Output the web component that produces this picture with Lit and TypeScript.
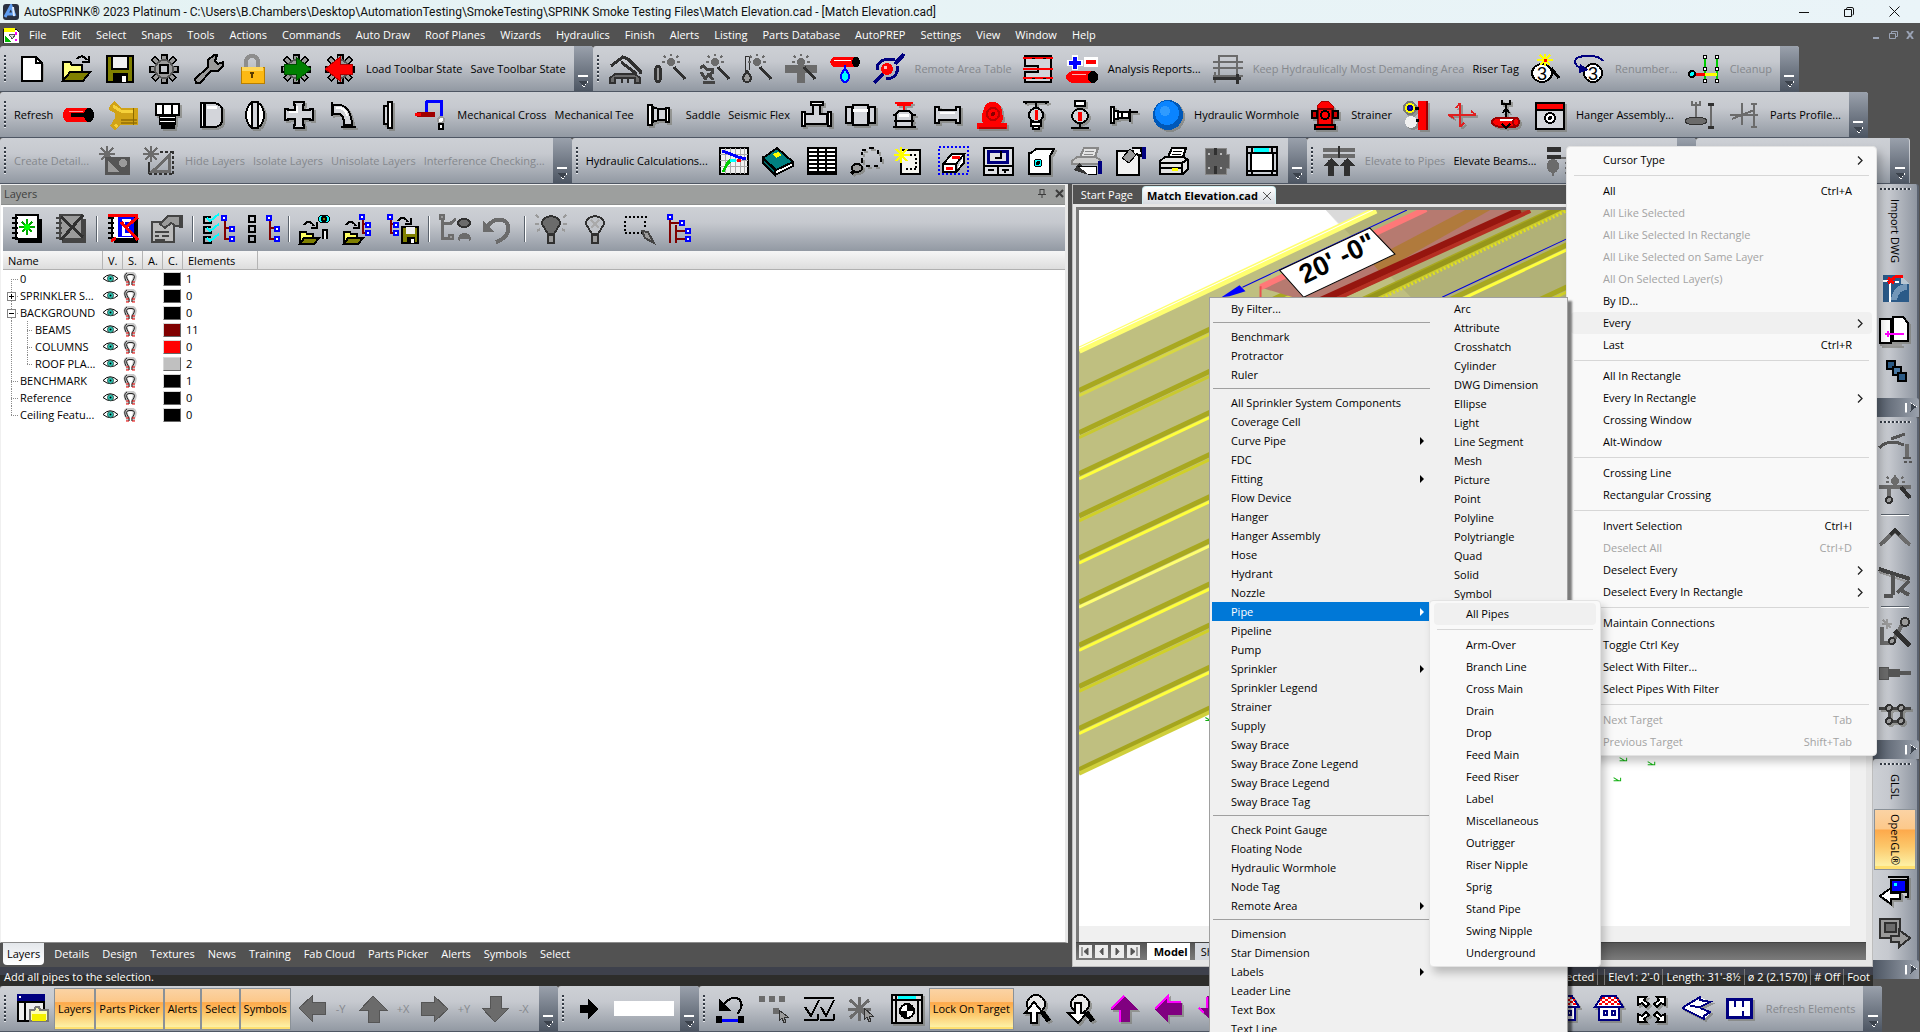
import { LitElement, html, svg, css, nothing } from "lit";
import { customElement, property } from "lit/decorators.js";
import { classMap } from "lit/directives/class-map.js";

/* ---------- icon shapes: [path, fill, stroke, stroke width] on a 32x30 grid ---------- */
type Shape = [string, string, string?, number?];
type Glyph = { t: string; x: number; y: number; s: number };

const K = "#000", W = "#fff", N = "none", G = "#6b6b6b", D = "#303030", L = "#9a9a9a";
const R = "#f00", B = "#00f", V = "#000080", O = "#808000", Y = "#ff0", C = "#00ffff", P = "#800080", S = "#d3d5da";

const el = (x: number, y: number, a: number, b = a) =>
  `M${x - a} ${y}a${a} ${b} 0 1 0 ${2 * a} 0a${a} ${b} 0 1 0 ${-2 * a} 0Z`;
const box = (x: number, y: number, w: number, h: number) => `M${x} ${y}h${w}v${h}h${-w}Z`;

const cog: Shape[] = [
  ["M16 0V30M1 15H31M5 4L27 26M27 4L5 26", N, K, 7],
  ["M16 2V28M3 15H29M6 5L26 25M26 5L6 25", N, L, 4],
  [el(16, 15, 9), L, "#555"],
  [box(12, 11, 8, 8), "#c4c7cc", K],
];
const wand = (x = 16): Shape[] => [
  [el(x, 8, 4), G],
  [`M${x} 0V2M${x - 9} 8h3M${x + 6} 8h3M${x - 7} 2l2 2M${x + 7} 2l-2 2`, N, G],
  [`M${x + 3} 13L${x + 14} 25`, N, D, 3],
];
const node = (x: number, y: number): Shape => [box(x, y, 4, 4), W, B];
const tree = (x: number): Shape[] => [
  [`M${x + 3} 5V25H${x + 9}M${x + 3} 14H${x + 9}`, N, "#800000"],
  node(x, 2), node(x + 8, 13), node(x + 8, 23),
];
const smallTree = (x: number): Shape[] => [
  [`M${x + 3} 5V19H${x + 8}M${x + 3} 10H${x + 8}`, N, "#800000"],
  node(x, 1), node(x + 6, 9), node(x + 6, 17),
];
const folder = (x: number, y: number): Shape[] => [
  [`M${x} ${y + 11}V${y}H${x + 6}L${x + 7} ${y + 2}H${x + 13}V${y + 6}`, "#ffff60", K],
  [`M${x} ${y + 12}L${x + 4} ${y + 6}H${x + 19}L${x + 14} ${y + 12}Z`, O, K],
];
const hop = (x: number, y: number): Shape => [`M${x} ${y + 4}Q${x + 5} ${y - 3} ${x + 10} ${y + 5}M${x + 7} ${y + 7}H${x + 13}V${y + 1}`, N, K];
const book = (f: string, s: string): Shape[] => [
  [box(7, 5, 24, 24), s], [box(5, 1, 22, 24), f, s],
  ["M1 4H7M1 9H7M1 14H7M1 19H7M1 24H7", N, s],
];
const printer = (s: string, f: string): Shape[] => [
  ["M10 11L14 2H28L25 11Z", W, s], ["M15 5H24M14 8H23", N, s, 1],
  ["M2 15L7 11H26L30 14V23L25 28H2Z", f, s], ["M3 17H24V27M24 17L30 13M3 22H23", N, s],
];
const pan = (rot: number): Shape[] => {
  const a = [
    "M16 2L30 16H22V28H11V16H2Z", "M2 15L16 2V9H30V21H16V28Z", "M16 28L30 14H22V2H11V14H2Z", "M30 15L16 2V9H2V21H16V28Z",
  ][rot];
  return [[a, P], [["M3 15L16 2M12 16V28", "M3 15L16 2V8H29", "M11 14V3M3 14L8 19", "M3 20V10H16V3"][rot], N, "#f0f"]];
};
const gray = (rot: number): Shape[] => {
  const a = [
    "M14 2L28 16H20V28H9V16H1Z", "M1 14L14 2V8H27V20H14V27Z", "M14 28L28 14H20V2H9V14H1Z", "M28 15L14 2V8H1V21H14V28Z",
  ][rot];
  return [[a, G, "#555", 1]];
};
const loupe = (up: boolean): Shape[] => [
  [el(16, 10, 9), "#e8e8e8", K], ["M22 18L29 27", N, K, 5],
  [up ? "M11 29V19H5L14 8L23 19H17V29Z" : "M11 9V19H4L14 29L23 19H17V9Z", W, K],
];
const house: Shape[] = [
  [box(7, 13, 20, 13), W, V], [box(12, 17, 3, 4), W, V], [box(20, 17, 3, 4), W, V],
  ["M3 13L10 2H24L31 13Z", W, V],
  ["M10 4h3M16 4h3M22 4h2M8 6h2M13 6h3M19 6h3M25 6h2M10 8h3M16 8h3M22 8h3M7 10h3M13 10h3M19 10h3M25 10h3", N, R],
];
const elbowHead: Shape[] = [["M16 3V8", N, K], [el(16, 15, 7, 7), S, K], ["M16 10V20", N, R, 3], [box(11, 22, 10, 4), W, K], [box(13, 26, 6, 3), W, K]];

const ICONS: Record<string, (Shape | Glyph)[]> = {
  "New": [["M7 4H21L28 10V28H7Z", "#999"], ["M6 3H20L26 9V27H6Z", W, K], ["M20 3V9H26", N, K]],
  "Open": [["M3 27V8H10L12 11H22V18", "#ffff80", K], ["M3 27L10 18H30L23 27Z", O, K], ["M17 5Q22 -1 27 6M22 8H29V2", N, K]],
  "Save": [[box(3, 2, 26, 26), O, K], [box(8, 2, 16, 13), "#f0f0f0", K], [box(9, 19, 15, 9), K], [box(18, 22, 4, 6), W]],
  "Options": cog,
  "Configure": [["M3 25L16 13V6L22 1H25L23 7L26 10L31 8V12L26 17H19L8 29H4Z", L, K]],
  "Lock": [["M10 13V7Q11 2 16 2Q21 2 22 7V13", N, "#8d8d8d", 4], [box(5, 13, 23, 16), "#fdb913", "#b97f00", 1], [box(6, 13, 21, 4), "#ffd75a"], ["M16 19V24M14 19H18", N, "#5a3a00"]],
  "Import State": [...cog, ["M4 10H16V3L31 15L16 27V20H4Z", "#008000", "#004d00", 1]],
  "Export State": [...cog, ["M28 10H16V3L1 15L16 27V20H28Z", R, "#a00", 1]],

  "Dome": [["M2 12L14 3L19 5L31 17V20M12 8L28 20", N, D, 3], ["M1 29V24L6 20H26L31 24V29H26V24H6V29ZM13 24V29M19 24V29", G, D]],
  "Auto Pipe": [[el(5, 20, 3, 8), L, D, 3], ...wand(18)],
  "Auto Sprinkler": [["M3 14L6 12L10 15H15V19L9 23M4 18L9 26M6 28H18M11 19L16 26", N, "#444", 3], ...wand(18)],
  "Auto Drop": [["M4 2V18M8 2V16M4 2H9", N, D, 1], ["M6 17L2 23Q2 28 6 28Q10 28 10 23Z", L, D], ...wand(16)],
  "Auto Tee": [["M0 11H32V19H20V29H12V19H0Z", G], ...wand(16)],
  "Pipe Drop": [["M4 3H27V13H4L1 8Z", R], ["M5 6H22", N, "#fff", 1], [el(27, 8, 4, 5), K], ["M16 14L12 21Q12 28 16 28Q20 28 20 21Z", C, B], ["M16 11V16", N, B]],
  "Target Line": [["M1 29L10 20M22 10L31 0", N, V, 4], ["M4 16Q4 5 18 5H22M24 12Q26 24 13 25", N, V, 3], [el(14, 15, 6), R], [box(11, 12, 3, 3), "#fbb"]],
  "Area Table": [["M3 2H29V28H3V18H16V12H3Z", S, K], ["M1 4H31M1 15H31M1 24H31", N, R], ["M11 4V5M22 4V5M11 24V25M22 24V25", N, K, 3]],
  "Add Remove": [["M6 1H12V6H17V12H12V16H6V12H1V6H6Z", W], ["M9 3V15M3 9H15", N, B, 4], [box(18, 3, 14, 10), W], [box(20, 6, 10, 4), R], [el(8, 23, 8, 6), R], [box(7, 17, 18, 12), R], ["M6 20H20", N, "#ffb0b0", 1], [el(27, 23, 5, 6), K]],
  "Area Grid": [["M8 2H26V24H8ZM2 8H32M2 14H32M2 22H32M8 24H2M4 18V29", N, G, 2], ["M2 24H30M26 20V30", N, D, 3]],
  "Tag Number": [[el(13, 19, 10, 9), W, K], { t: "3", x: 8, y: 26, s: 18 }, ["M16 0V12M8 6H24M11 1L21 11M21 1L11 11", N, Y], [box(15, 5, 3, 3), R], ["M22 14L30 24", N, K, 3]],
  "Renumber Tag": [[el(20, 19, 9, 9), W, K], { t: "3", x: 15, y: 26, s: 18 }, ["M30 7Q25 1 14 2Q2 2 2 8Q3 13 10 15", N, V, 2], ["M7 10L16 16L6 19Z", V]],
  "Clean Nodes": [["M17 4V28M29 4V28", N, "#0c0", 2], ["M4 20H17", N, R, 3], ["M17 20H29", N, Y, 3], [el(4, 20, 3), C, K], ...[3, 15, 27].flatMap((y) => [[el(17, y, 2), W, K, 1], [el(29, y, 2), W, K, 1]] as Shape[])],

  "Pipe": [[el(5, 15, 5, 7), R], [box(5, 8, 20, 14), R], [box(8, 13, 14, 4), K], ["M6 11H20", N, "#ff9a9a", 1], [el(26, 15, 5, 7), K]],
  "Siamese": [["M3 5L8 1L14 8H31V25H14L8 30L3 26L8 18V13L2 10Z", "#d1a316"], ["M6 6L14 11H26M10 25L8 27", N, "#f5d13a", 3], ["M14 23H30M14 20H30", N, "#a27a08", 2], ["M26 8V25", N, "#8a6a00", 1]],
  "Cap Nut": [["M5 4H28V15H5ZM12 4V15M21 4V15", W, K], ["M8 18H25M8 22H25M10 26H24", N, K, 5], ["M9 17H24M9 21H24", N, W, 1]],
  "Cap": [["M10 3H20Q27 5 27 10V20Q27 26 20 27H10Z", S, K], [box(6, 3, 3, 24), W, K], ["M12 7H22", N, W, 3]],
  "Coupling": [[el(16, 15, 9, 13), W, K], [box(13, 2, 6, 26), S, K]],
  "Cross": [["M11 2H21V5H20V10H27V9H30V20H27V19H20V25H21V28H11V25H12V19H5V20H2V9H5V10H12V5H11Z", S, K], ["M14 6V12H6", N, W]],
  "Elbow": [["M6 5H12Q24 6 25 25H17Q17 14 12 14H6Z", S, K], ["M5 2V16M14 27H29", N, K, 2], ["M9 8H13Q19 9 20 16", N, W]],
  "Flange": [[box(17, 2, 4, 26), W, K], [box(13, 6, 4, 18), S, K]],
  "Flexible Drop": [["M11 14V3Q11 1 14 1H26V16", N, B, 3], [box(2, 12, 18, 5), "#a00000"], ["M0 14H6", N, R, 3], [el(26, 20, 3), W, L], [box(24, 24, 4, 5), W, K]],
  "Reducer": [["M4 5H8V25H4Z", W, K], ["M9 7L14 9V20L9 22Z", S, K], [box(14, 9, 8, 11), S, K], [box(22, 8, 3, 14), W, K]],
  "Tee": [["M13 5H20V14H27V24H5V14H13Z", S, K], [box(2, 12, 3, 14), W, K], [box(28, 12, 3, 14), W, K], [box(11, 2, 12, 3), W, K]],
  "Union": [[box(2, 7, 6, 16), S, K], [box(25, 7, 6, 16), S, K], [box(9, 5, 15, 20), S, K], ["M9 10H24", N, W, 3]],
  "Valve": [["M7 3H25M9 5H23M16 5V12", N, R], ["M8 14L11 11H21L24 14V27H8Z", S, K], ["M5 15H8M24 15H28M5 27H8M24 27H28M6 21H26", N, K, 2], ["M11 15H21", N, W, 3]],
  "Nipple": [["M3 7H7V10H24V7H28V23H24V20H7V23H3Z", S, K], ["M8 13H23", N, W, 2]],
  "Pump": [["M8 9Q9 2 16 2Q26 2 26 12Q28 20 25 23H31V29H1V23H7Q4 17 8 9Z", R], [el(17, 14, 6), N, "#b00"], [el(17, 14, 2), "#800"], ["M3 28H30", N, "#b00"]],
  "Upright Sprinkler": [["M3 2H29M6 2V4M26 2V4", N, K, 2], ...elbowHead],
  "Pendent Sprinkler": [[box(11, 1, 10, 5), W, K], [el(16, 16, 8, 7), S, K], ["M16 12V21", N, R, 4], ["M16 22V27M7 28H25", N, K, 2]],
  "Sidewall Sprinkler": [["M3 7H6V23H3ZM6 11H10V19H6ZM10 12H21V18H10M22 9V22M22 12H30M14 12V19", W, K]],
  "Sphere": [[el(16, 15, 15), "#0058b8"], [el(15, 13, 12), "#0a84ff"], [el(13, 11, 5), "#2f9bff"]],
  "Hydrant": [["M13 1H19L24 6V9H8V6Z", R, "#a00", 1], [box(9, 9, 14, 16), R, "#700"], [box(3, 11, 5, 7), "#c00", K], [box(24, 11, 5, 7), "#c00", K], [el(16, 15, 4), R, K], [box(6, 25, 20, 4), "#d00", K]],
  "Wall Pipe": [[box(16, 1, 9, 29), R], ["M25 1V30", N, "#900"], [el(8, 8, 6), Y, "#777"], [el(8, 8, 2), B, V], [el(9, 22, 6), "#f0f0f0"], ["M13 8H17M14 20H17", N, K, 3]],
  "Direction": [["M14 3V27M2 15H30M14 3L10 8M30 15L25 11M2 15L8 18M14 27L18 23", N, "#e02020"]],
  "Hanger": [["M16 4V22M12 0V4H20V0", N, K], [el(8, 22, 6, 4), R, "#900"], [box(8, 18, 18, 8), R], ["M8 18H26M8 27H26", N, "#900"], ["M10 20H24", N, W], [el(26, 22, 3, 4), R, "#900"], ["M13 13L16 8L19 13M12 24L16 28L20 24", N, K]],
  "Hanger Report": [[box(2, 3, 28, 26), "#d4d6da", K], [box(3, 4, 26, 5), R], ["M2 10H30", N, K], [el(16, 18, 5), W, K], [el(16, 18, 1), K, K]],
  "Move Hanger": [["M12 2V18M8 1V5H16V1M27 4V27", N, G, 2], [el(12, 21, 11, 4), G, D, 1], ["M24 4H30M24 27H30", N, D, 3]],
  "Spread Hanger": [["M14 3V25M2 15H30M4 19L26 10M26 3V27M23 4H29M23 27H29", N, G, 2]],

  "Copy Detail": [["M8 0V16M0 8H16M2 2L14 14M14 2L2 14", N, G, 2], [box(6, 11, 25, 18), "#555"], [el(24, 17, 4), L], ["M9 26V15L20 26Z", L]],
  "Detail Area": [["M8 0V16M0 8H16M2 2L14 14M14 2L2 14", N, G, 2], ["M6 28V16M6 28h3m2 0h3m2 0h3m2 0h3m2 0h3M30 28v-3m0-2v-3m0-2v-3m0-2v-3m0-2v-2h-3m-2 0h-3m-2 0h-3", N, D, 2], ["M10 25L26 10V25Z", N, G, 3]],
  "Hydraulic Graph": [[box(2, 2, 28, 26), "#f2f2f2", K], ["M7 2V28M12 2V28M17 2V28M22 2V28M26 2V28M2 8H30M2 14H30M2 20H30", N, "#aaa", 1], ["M4 5L10 7L20 11L28 13", N, B, 3], ["M5 26L9 18L13 14", N, "#0c0", 3], [box(12, 13, 6, 3), C], [box(19, 13, 4, 3), R]],
  "Reference Book": [["M1 12L15 2L31 16L14 24Z", "#008080", K], ["M1 12V17L13 29L31 20V16L14 24Z", W, K], ["M1 12V17L13 29V24Z", "#006a6a", K], ["M11 8L16 6L20 9L14 12Z", Y]],
  "Listing": [[box(2, 2, 28, 26), W, K], ["M2 6H30M2 10H30M2 14H30M2 18H30M2 22H30M2 26H30", N, K, 2], ["M12 2V28M20 2V28", N, K]],
  "Zoom Area": [["M12 4H16M19 2H24M28 4V8M31 11V16M28 20H24M20 20H16M12 17V12M12 9V6", N, K, 2], [el(7, 22, 5, 4), L, K], ["M1 28L4 25", N, K, 3]],
  "New Sheet": [[box(7, 4, 19, 24), "#f6f6f0", K], ["M12 9h2m2 0h2m2 0h2M22 12v2m0 2v2m0 2v2M12 23h2m2 0h2m2 0h2", N, K, 2], ["M7 1V17M0 9H16M2 3L13 15M13 3L2 15", N, Y]],
  "Erase Region": [[box(1, 1, 29, 27), N, B, 2], ["M5 18L14 8H26L18 18V26H5ZM18 18H5M18 26L26 17V8", W, K], ["M14 11H22M8 22H15", N, R, 3]],
  "Title Block": [[box(2, 2, 29, 27), "#e0e2e6", K], [box(6, 5, 19, 11), N, V, 3], ["M2 20H31M16 20V29M19 5V12H13", N, K], ["M6 24H12M20 24H27M23 24V27", N, K]],
  "Report View": [["M5 7L10 3H28L24 10V28H3V7Z", W, K], [el(12, 17, 4, 4), C, K, 1], [el(12, 17, 1), O, K]],
  "Print Setup": [["M10 11L14 2H28L25 11Z", "#e4e4e4", "#888"], ["M15 5H24M14 8H23", N, "#888", 1], ["M2 15L7 11H26L30 14V18H2Z", "#ccc", "#888"], ["M4 24L9 17L24 28H15Z", "#333"], ["M8 20H26V28H18", W, K, 1], [box(28, 15, 4, 13), V]],
  "Properties": [[box(3, 5, 22, 24), "#f2f2f2", K], ["M8 12L16 3L22 9L15 17Z", L, K, 1], ["M18 2H27L28 10L22 8", W, K], [box(28, 1, 4, 12), V]],
  "Print": [...printer(K, "#e4e4e4"), [box(14, 22, 6, 3), Y]],
  "Connect": [["M3 2H24V8H27V22H24V28H3Z", "#5c5c5c", "#888", 1], ["M13 2V9M13 20V28", N, D, 3], ["M7 7V9M7 21V23M19 7V9M19 21V23", N, "#bbb", 2]],
  "Viewport": [[box(1, 1, 30, 28), "#ccd0d6", K], [box(8, 2, 15, 5), C], [box(5, 7, 22, 18), W, K], ["M1 7H5M27 7H31M1 25H5M27 25H31M6 1V7M26 1V7M6 25V29M26 25V29", N, K]],
  "Raise Pipes": [["M0 4H32M0 10H32", N, G, 4], ["M16 0V12", N, D, 2], ["M8 30V14M24 30V14", N, D, 6], ["M0 20L8 12L16 20ZM16 20L24 12L32 20Z", D]],
  "Lower Pipes": [[box(0, 1, 14, 5), D], [box(0, 9, 14, 4), D], [el(6, 20, 6, 7), G], ["M6 22V30M14 12H24M18 17H24M18 22H24M18 27H24", N, G]],

  "Layer New": [...book(W, K), ["M16 5V21M8 13H24M11 8L21 18M21 8L11 18", N, "#0a0", 2], [el(16, 13, 3), "#0f0"]],
  "Layer Delete": [...book(L, "#444"), ["M6 3L28 23M28 1L6 26", N, D, 3]],
  "Layer Erase": [...book(W, K), [box(11, 3, 16, 20), B], ["M24 6H16V20H24M16 13H22", N, W, 3], ["M1 1H31M4 27L9 24M19 13L31 3M14 8L31 26", N, R, 3]],
  "Layer Properties": [[box(1, 8, 22, 20), "#bbb", "#444"], ["M4 18H18M4 22H8M11 22H18M4 26H14", N, "#444", 2], ["M9 10L17 2H29V12H25L20 9L14 14Z", L, "#444"], [box(28, 1, 4, 13), "#444"]],
  "Select Tree": [...tree(19), ["M8 3H1V9H8V6M8 13H1V19H8V16M8 23H1V29H8V26", N, K], ["M4 4L7 7L16 0M4 14L7 17L16 10M4 24L7 27L16 20", N, C, 2]],
  "Clear Tree": [[box(2, 2, 6, 6), N, K], [box(2, 12, 6, 6), N, K], [box(2, 22, 6, 6), N, K], ...tree(20)],
  "Load View": [hop(5, 7), ...folder(1, 18), [el(25, 5, 6, 4), C, K, 1], [el(25, 5, 2), O, K], ["M24 25V16H28V25", "#eee", K, 2]],
  "Load Layers": [hop(3, 7), ...folder(1, 18), ...smallTree(17)],
  "Save Layers": [...smallTree(1), hop(11, 3), [box(15, 13, 16, 16), O, K], [box(19, 13, 9, 7), "#eee"], [box(20, 23, 8, 6), K], [box(24, 25, 3, 4), W]],
  "Group Layers": [["M3 5V24H10M3 9H12L17 5", N, G, 3], [box(1, 1, 4, 4), L, G], [el(25, 9, 6, 4), G, D, 2], [box(10, 21, 4, 4), L, G], ["M19 25Q20 19 25 19Q31 19 32 25L30 28V25H21V28Z", G]],
  "Undo": [["M4 13Q10 4 20 6Q27 9 25 18Q22 25 13 28", N, G, 4], ["M0 7V18H12Z", G]],
  "Light On": [["M16 2Q25 3 25 10L19 20H13L7 10Q7 3 16 2Z", G, D], [box(13, 21, 6, 8), L, D], ["M1 1L4 4M31 1L28 4M0 10H4M28 10H32M2 17L5 15M30 17L27 15", N, L, 2]],
  "Light Off": [["M16 2Q25 3 25 10L19 20H13L7 10Q7 3 16 2Z", "#c0c3c8", D], [box(13, 21, 6, 8), L, D], ["M12 6L20 14M20 6L12 14", N, "#aaa", 2]],
  "Region Select": [["M2 3h2m2 0h2m2 0h2m2 0h2m2 0h2m2 0h2M2 19h2m2 0h2m2 0h2m2 0h2m2 0h2M2 7v2m0 2v2m0 2v2M22 7v2m0 2v2", N, K, 2], ["M19 17L25 18L31 29L22 24Z", L, "#444"]],
  "Layer Tree": [["M3 5V29M3 9H13M9 11V29M9 17H19M9 25H19", N, "#800000"], node(1, 1), node(13, 7), node(19, 15), node(19, 23)],

  "Map": [["M4 1H22L30 10V28H4Z", "#2b5a88"], ["M12 26Q14 10 28 10V16Q20 16 18 26Z", "#7396b8"], ["M22 1L30 10H22Z", "#b9c6d2"], ["M11 9V28M4 7H9M16 8H20", N, W, 2], ["M9 4L15 9M15 4L9 9M14 4L18 2H24", N, R, 3]],
  "Copy Sheets": [["M1 3H12V27H1Z", W, K], [box(1, 28, 22, 2), "#999"], ["M14 1H24L29 7V25H14Z", W, K], ["M6 18H25M9 15V21", N, "#f0f", 2]],
  "Array": [[box(8, 3, 8, 8), "#2b5a85", K], [box(14, 9, 8, 8), "#4878a4", K], [box(19, 15, 8, 8), "#2b5a85", K]],
  "Arm": [["M0 15Q10 5 25 12M12 6L26 1", N, "#555", 3], [box(26, 11, 4, 15), G], ["M25 29h3m2 0h3M24 25H32", N, "#555", 2]],
  "Drop Wizard": [["M0 12H32M10 12V25", N, G, 4], [el(16, 6, 4), G], ["M16 0V2M8 2l2 2M24 2l-2 2M7 7h3M23 7h3", N, G], ["M22 12L31 23", N, D, 4], [el(10, 25, 3), L, D]],
  "Peak": [["M1 20L16 6L31 20", N, G, 4], ["M11 10L16 5L21 10", N, D, 4]],
  "Brace": [["M0 2L31 12", N, "#444", 4], ["M0 5L31 16", N, L, 2], ["M14 8V28M18 26L30 14M5 29H14M20 22L30 28", N, "#555", 4]],
  "Route Wizard": [["M3 10V26H14M14 24L24 6", N, G, 4], [el(26, 5, 4), L, D], ["M16 14L31 29", N, D, 5], ["M8 2V12M3 7H13M4 3L12 11", N, L, 2], [el(13, 24, 3), L, D]],
  "Reduce": [["M0 8H9V20H0Z", G, "#555", 1], [box(9, 10, 12, 8), "#555"], ["M20 14H32", N, "#555", 4]],
  "Grid Nodes": [["M0 7H32M10 7V20M22 7V20M10 20H22", N, "#444", 3], ...[[10, 7], [22, 7], [10, 20], [22, 20]].map(([x, y]) => [el(x, y, 3), L, D, 2] as Shape)],
  "Screen In": [["M9 1H29V21H26", "#ccc", K], [box(12, 4, 15, 12), B, K], [box(15, 7, 3, 3), C], ["M12 12V17H21V23H12V28L1 20Z", W, K]],
  "Screen Out": [[box(1, 1, 20, 19), L, D], [box(6, 5, 11, 9), G, D], ["M12 18H20V12L31 20L20 29V24H12Z", L, D]],

  "Explorer": [[box(1, 0, 28, 8), V], [box(2, 8, 26, 19), "#eee", K], [box(3, 2, 2, 2), W], ["M9 8V27", N, K], ["M14 27V16H18L20 13H23L24 16H32V27Z", "#ffffb0", "#777"], [box(16, 20, 14, 7), "#f5f000"]],
  "-Y": gray(1), "+X": gray(0), "+Y": gray(3), "-X": gray(2),
  "Go": [["M6 11H14V5L24 15L14 25V19H6Z", K]],
  "Revert": [["M4 5V17H16Z", K], ["M8 12Q15 1 24 5Q30 12 22 20", N, K, 2], ["M4 26H26", N, B, 3], [box(1, 22, 6, 7), K], [box(23, 22, 6, 7), K]],
  "Pick Series": [[box(0, 2, 6, 6), G], [box(10, 2, 6, 6), G], [box(20, 2, 6, 6), G], [box(14, 14, 6, 6), G], ["M20 16V27L23 24L25 29L27 28L25 23H29Z", L, D, 1]],
  "Check Pair": [["M1 4H31M1 26H15M17 26H31", N, K, 2], ["M2 13L8 22L16 6M18 13L23 22L31 6M15 20V26M31 20V26", N, K, 2]],
  "Burst Pick": [["M12 3V27M1 15H24M3 6L22 24M22 6L3 24", N, G, 3], ["M17 14V26L20 23L22 28L24 27L22 22H26Z", L, D, 1]],
  "Target View": [[box(1, 1, 30, 28), "#ddd", K], [box(7, 2, 18, 3), C], ["M1 6H31M5 1V29M27 6V29", N, K], [el(16, 17, 7), W, K], ["M16 10A7 7 0 0 1 23 17H16ZM16 24A7 7 0 0 1 9 17H16Z", K]],
  "Zoom In": loupe(true), "Zoom Out": loupe(false),
  "Pan Up": pan(0), "Pan Left": pan(1), "Pan Down": pan(2), "Pan Right": pan(3),
  "Home": house,
  "Fit": [["M2 3H10L8 6L13 10L10 13L6 9L2 11ZM29 3H21L23 6L18 10L21 13L25 9L29 11ZM2 28H10L8 25L13 21L10 18L6 22L2 20ZM29 28H21L23 25L18 21L21 18L25 22L29 20Z", W, K]],
  "Isometric": [["M2 14L20 3L30 8L20 14L30 20L24 25L2 14Z", W], ["M2 14L20 3V6L30 8L20 13L10 12M2 14L24 25V22L30 18L20 14", N, V, 2]],
  "Floor Plan": [[box(3, 5, 24, 18), W, V, 3], ["M11 4V13M19 4V13M19 17V22", N, V, 2]],
};
/* Icons that carry a soft offset shade on the bar */
const SHADED = new Set([
  "Cap Nut", "Cap", "Coupling", "Cross", "Elbow", "Flange", "Reducer", "Tee", "Union", "Valve", "Nipple", "Pump", "Upright Sprinkler", "Pendent Sprinkler",
  "Sidewall Sprinkler", "Sphere", "Hydrant", "Wall Pipe", "Direction", "Hanger", "Hanger Report", "Zoom Area", "Report View",
  "Zoom In", "Zoom Out", "Pan Up", "Pan Left", "Pan Down", "Pan Right", "Home", "Fit", "Isometric", "Floor Plan", "Target View", "Copy Sheets", "Screen In", "Grid Nodes",
]);

const icon = (name: string) => svg`
  <svg class=${SHADED.has(name) ? "ico shade" : "ico"} viewBox="0 0 32 30" width="32" height="30" aria-hidden="true">
    ${(ICONS[name] ?? []).map((s) =>
      Array.isArray(s)
        ? svg`<path d=${s[0]} fill=${s[1]} stroke=${s[2] ?? "none"} stroke-width=${s[3] ?? 2}
            stroke-dasharray=${name === "Erase Region" && s[2] === B ? "2 2" : "none"}></path>`
        : svg`<text x=${s.x} y=${s.y} font-size=${s.s} font-family="Liberation Sans, sans-serif">${s.t}</text>`)}
  </svg>`;

/* Toolbar items: "name" = icon button, "t:" label, "d:" disabled label, "o:" pressed label, "|" divider, "#" entry */
const TOP = [
  [
    ["New", "Open", "Save", "Options", "Configure", "Lock", "Import State", "Export State", "t:Load Toolbar State", "t:Save Toolbar State"],
    ["Dome", "Auto Pipe", "Auto Sprinkler", "Auto Drop", "Auto Tee", "Pipe Drop", "Target Line", "d:Remote Area Table", "Area Table", "Add Remove",
      "t:Analysis Reports...", "Area Grid", "d:Keep Hydraulically Most Demanding Area", "t:Riser Tag", "Tag Number", "Renumber Tag", "d:Renumber...", "Clean Nodes", "d:Cleanup"],
  ],
  [
    ["t:Refresh", "Pipe", "Siamese", "Cap Nut", "Cap", "Coupling", "Cross", "Elbow", "Flange", "Flexible Drop", "t:Mechanical Cross", "t:Mechanical Tee", "Reducer",
      "t:Saddle", "t:Seismic Flex", "Tee", "Union", "Valve", "Nipple", "Pump", "Upright Sprinkler", "Pendent Sprinkler", "Sidewall Sprinkler", "Sphere",
      "t:Hydraulic Wormhole", "Hydrant", "t:Strainer", "Wall Pipe", "Direction", "Hanger", "Hanger Report", "t:Hanger Assembly...", "Move Hanger", "Spread Hanger", "t:Parts Profile..."],
  ],
  [
    ["d:Create Detail...", "Copy Detail", "Detail Area", "d:Hide Layers", "d:Isolate Layers", "d:Unisolate Layers", "d:Interference Checking..."],
    ["t:Hydraulic Calculations...", "Hydraulic Graph", "Reference Book", "Listing", "Zoom Area", "New Sheet", "Erase Region", "Title Block", "Report View",
      "Print Setup", "Properties", "Print", "Connect", "Viewport"],
    ["Raise Pipes", "d:Elevate to Pipes", "t:Elevate Beams...", "Lower Pipes", "Raise Pipes", "Lower Pipes"],
    ["Pipe", "Tee", "Cross", "t:Add"],
  ],
];
const LAYER_TOOLS = ["Layer New", "Layer Delete", "|", "Layer Erase", "Layer Properties", "|", "Select Tree", "Clear Tree", "|", "Load View", "Load Layers",
  "Save Layers", "|", "Group Layers", "Undo", "|", "Light On", "Light Off", "Region Select", "Layer Tree"];
const BOTTOM = [
  ["Explorer", "o:Layers", "o:Parts Picker", "o:Alerts", "o:Select", "o:Symbols", "a:-Y", "a:+X", "a:+Y", "a:-X"],
  ["Go", "#"],
  ["Revert", "Pick Series", "Check Pair", "Burst Pick", "Target View", "o:Lock On Target", "Zoom In", "Zoom Out", "Pan Up", "Pan Left", "Pan Down", "Pan Right",
    "Home", "Home", "Home", "Home", "Home", "Home", "Home", "Home", "Fit", "Isometric", "Floor Plan", "d:Refresh Elements"],
];
const SIDE = [
  ["t:Import DWG", "Map", "Copy Sheets", "Array"],
  ["Arm", "Drop Wizard", "|", "Peak", "Brace", "|", "Route Wizard", "Reduce", "Grid Nodes"],
  ["t:GLSL", "o:OpenGL®", "Screen In", "Screen Out"],
];
const MENUS = ["File", "Edit", "Select", "Snaps", "Tools", "Actions", "Commands", "Auto Draw", "Roof Planes", "Wizards", "Hydraulics", "Finish", "Alerts",
  "Listing", "Parts Database", "AutoPREP", "Settings", "View", "Window", "Help"];
const PANEL_TABS = ["Layers", "Details", "Design", "Textures", "News", "Training", "Fab Cloud", "Parts Picker", "Alerts", "Symbols", "Select"];
const LAYERS: [string, number, string, number, string][] = [
  ["0", 0, "#000000", 1, "first"], ["SPRINKLER S...", 0, "#000000", 0, "plus"], ["BACKGROUND", 0, "#000000", 0, "minus"],
  ["BEAMS", 1, "#800000", 11, ""], ["COLUMNS", 1, "#ff0000", 0, ""], ["ROOF PLA...", 1, "#c0c0c0", 2, "last"],
  ["BENCHMARK", 0, "#000000", 1, ""], ["Reference", 0, "#000000", 0, ""], ["Ceiling Featu...", 0, "#000000", 0, "last"],
];

/* Menu entries: "-" separator, "!" disabled, ">" submenu, "*" current, "|" before a shortcut */
const SELECT_MENU = ["Cursor Type>", "-", "All|Ctrl+A", "!All Like Selected", "!All Like Selected In Rectangle", "!All Like Selected on Same Layer",
  "!All On Selected Layer(s)", "By ID...", "*Every>", "Last|Ctrl+R", "-", "All In Rectangle", "Every In Rectangle>", "Crossing Window", "Alt-Window", "-",
  "Crossing Line", "Rectangular Crossing", "-", "Invert Selection|Ctrl+I", "!Deselect All|Ctrl+D", "Deselect Every>", "Deselect Every In Rectangle>", "-",
  "Maintain Connections", "Toggle Ctrl Key", "Select With Filter...", "Select Pipes With Filter", "-", "!Next Target|Tab", "!Previous Target|Shift+Tab"];
const EVERY_1 = ["By Filter...", "-", "Benchmark", "Protractor", "Ruler", "-", "All Sprinkler System Components", "Coverage Cell", "Curve Pipe>", "FDC", "Fitting>",
  "Flow Device", "Hanger", "Hanger Assembly", "Hose", "Hydrant", "Nozzle", "*Pipe>", "Pipeline", "Pump", "Sprinkler>", "Sprinkler Legend", "Strainer", "Supply",
  "Sway Brace", "Sway Brace Zone Legend", "Sway Brace Legend", "Sway Brace Tag", "-", "Check Point Gauge", "Floating Node", "Hydraulic Wormhole", "Node Tag",
  "Remote Area>", "-", "Dimension", "Star Dimension", "Labels>", "Leader Line", "Text Box", "Text Line"];
const EVERY_2 = ["Arc", "Attribute", "Crosshatch", "Cylinder", "DWG Dimension", "Ellipse", "Light", "Line Segment", "Mesh", "Picture", "Point", "Polyline",
  "Polytriangle", "Quad", "Solid", "Symbol"];
const PIPE_MENU = ["*All Pipes", "-", "Arm-Over", "Branch Line", "Cross Main", "Drain", "Drop", "Feed Main", "Feed Riser", "Label", "Miscellaneous", "Outrigger",
  "Riser Nipple", "Sprig", "Stand Pipe", "Swing Nipple", "Underground"];

const base = css`
  * { box-sizing: border-box; }
  button, input { font: inherit; color: inherit; margin: 0; padding: 0; border: 0; background: none; border-radius: 0; }
  :host { font: 11px/16px "Open Sans", "Noto Sans", "Liberation Sans", sans-serif; }
`;

@customElement("tool-strip")
class ToolStrip extends LitElement {
  @property({ attribute: false }) items: string[] = [];
  @property({ type: Boolean, reflect: true }) vertical = false;
  @property({ type: Boolean, reflect: true }) plain = false;

  static styles = [base, css`
    :host { display: flex; height: 46px; border-bottom: 1px solid #4e5663; border-radius: 3px 3px 0 0; flex: none; color: #000;
      background: linear-gradient(#cdd0d5, #c6c9cf 35%, #9299a3); }
    .grip { width: 2px; height: 27px; margin: 9px 4px 0; flex: none;
      background: repeating-linear-gradient(#333a44 0 2px, #e6e8eb 2px 3px, transparent 3px 4px); }
    .items { display: flex; align-items: center; flex: none; padding-right: 4px; }
    .ib { width: 44px; height: 42px; display: grid; place-items: center; flex: none; }
    .ico { display: block; shape-rendering: crispEdges; overflow: visible; }
    .shade { filter: drop-shadow(2px 2px 0 rgba(120, 120, 112, .6)); }
    .tb { padding: 0 4px; height: 42px; white-space: nowrap; }
    .off { color: #85888d; }
    .on { border: 1px solid #8a9198; padding: 0 3px;
      background: linear-gradient(#fbd3a4, #fcc88a 32%, #fda94b 34%, #fcc76a 62%, #fdf0a4 94%, #ffe070 95%); }
    .ax { display: flex; align-items: center; width: 61px; color: #85888d; gap: 6px; padding-left: 7px; }
    .div { width: 2px; height: 26px; margin: 0 3px; background: linear-gradient(90deg, #5a626c 50%, #fff 50%); }
    .entry { width: 60px; height: 15px; background: #fff; margin: 0 2px 0 2px; padding: 0 2px; }
    .more { width: 19px; flex: none; display: flex; align-items: flex-end; justify-content: center; padding-bottom: 3px;
      background: linear-gradient(#9aa1ac, #4d5663); border-radius: 0 3px 0 0; }
    :host([plain]) { border: 0; height: 44px; border-radius: 0; }
    :host([plain]) .items { padding-left: 2px; }
    :host([vertical]) { flex-direction: column; width: 46px; height: auto; border: 0; border-right: 2px solid #5b6370;
      background: linear-gradient(90deg, #cdd0d5, #c6c9cf 35%, #8f96a1); }
    :host([vertical]) .grip { height: 2px; width: 31px; margin: 4px 0 4px 7px;
      background: repeating-linear-gradient(90deg, #333a44 0 2px, #e6e8eb 2px 3px, transparent 3px 4px); }
    :host([vertical]) .items { flex-direction: column; padding: 0; flex: 1; }
    :host([vertical]) .ib { height: 42px; width: 44px; }
    :host([vertical]) .tb { writing-mode: vertical-rl; text-orientation: sideways; height: auto; width: 42px; padding: 5px 0; display: grid; place-items: center; }
    :host([vertical]) .on { padding: 4px 0; width: 42px; margin-top: 4px; }
    :host([vertical]) .div { width: 28px; height: 2px; margin: 3px 0; background: linear-gradient(#5a626c 50%, #fff 50%); }
    :host([vertical]) .more { width: 46px; height: 19px; align-items: center; justify-content: flex-end; padding: 0 3px 0 0;
      background: linear-gradient(90deg, #4d5663, #9aa1ac); }
    :host([vertical]) .more svg { transform: rotate(-90deg); }
  `];

  private item(it: string) {
    const text = it.slice(2);
    if (it === "|") return html`<span class="div"></span>`;
    if (it === "#") return html`<input class="entry" type="text" aria-label="Command" />`;
    if (it[1] !== ":") return html`<button class="ib" aria-label=${it}>${icon(it)}</button>`;
    if (it[0] === "a") return html`<button class="ax" disabled>${icon(text)}<span>${text}</span></button>`;
    const kind = it[0];
    return html`<button class=${classMap({ tb: true, off: kind === "d", on: kind === "o" })} ?disabled=${kind === "d"}>${text}</button>`;
  }

  render() {
    return html`
      ${this.plain ? nothing : html`<span class="grip"></span>`}
      <div class="items">${this.items.map((it) => this.item(it))}</div>
      ${this.plain ? nothing : html`<button class="more" aria-label="More buttons">
        <svg width="10" height="13" viewBox="0 0 10 13" shape-rendering="crispEdges">
          <path d="M0 1H10" stroke="#fff" stroke-width="2"></path>
          <path d="M1 6H10L5.500 12Z" fill="#3c434d"></path><path d="M10 6L6 12L4 10" fill="none" stroke="#fff" stroke-dasharray="2 1"></path>
        </svg></button>`}`;
  }
}

@customElement("pop-menu")
class PopMenu extends LitElement {
  @property({ attribute: false }) columns: string[][] = [];
  @property({ type: Boolean, reflect: true }) classic = false;

  static styles = [base, css`
    :host { display: flex; background: #f9f9f9; border: 1px solid #e3e3e3; border-radius: 4px; padding: 2px 4px; color: #000;
      box-shadow: 4px 6px 8px rgba(0, 0, 0, .22); }
    .col { flex: 1; }
    .row { display: flex; width: 100%; height: 22px; align-items: center; padding: 0 14px 0 32px; text-align: left; border-radius: 4px; white-space: nowrap; }
    .row span { flex: 1; }
    .row kbd { font: inherit; padding-right: 6px; }
    .row svg { flex: none; margin-right: -5px; }
    .off { color: #a3a3a3; }
    .cur { background: #f0f0f0; }
    hr { margin: 4px 3px; border: 0; height: 1px; background: #d7d7d7; }
    :host([classic]) { background: #f0f0f0; border: 1px solid #a0a0a0; border-radius: 0; padding: 1px 2px; box-shadow: 4px 4px 2px rgba(0, 0, 0, .5); }
    :host([classic]) .col { flex: 0 0 217px; }
    :host([classic]) .col + .col { flex: 1; margin-left: 6px; }
    :host([classic]) .row { height: 19px; padding: 0 9px 0 19px; border-radius: 0; }
    :host([classic]) .cur { background: #0078d7; color: #fff; }
    :host([classic]) hr { margin: 4px -1px 4px 1px; background: #a0a0a0; }
  `];

  private row(raw: string) {
    if (raw === "-") return html`<hr />`;
    const off = raw[0] === "!", cur = raw[0] === "*", sub = raw.endsWith(">");
    const [label, key] = raw.replace(/^[!*]|>$/g, "").split("|");
    const arrow = this.classic
      ? svg`<svg width="5" height="8" viewBox="0 0 5 8"><path d="M0 0V8L4 4Z" fill="currentColor"></path></svg>`
      : svg`<svg width="6" height="9" viewBox="0 0 6 9"><path d="M1 0.500L5 4.500L1 8.500" fill="none" stroke="#222" stroke-width="1.300"></path></svg>`;
    return html`<button class=${classMap({ row: true, off, cur })} role="menuitem" ?disabled=${off}>
      <span>${label}</span>${key ? html`<kbd>${key}</kbd>` : nothing}${sub ? arrow : nothing}</button>`;
  }

  render() {
    return this.columns.map((c) => html`<div class="col" role="menu">${c.map((r) => this.row(r))}</div>`);
  }
}

@customElement("layers-panel")
class LayersPanel extends LitElement {
  static styles = [base, css`
    :host { display: flex; flex-direction: column; min-height: 0; border: 1px solid #f0f0f0; border-right: 3px solid #e8e8e8; border-bottom: 1px solid #8c8c8c; background: #fff; color: #000; }
    .head { display: flex; align-items: center; height: 20px; padding: 0 1px 2px 3px; background: #9d9f9e; color: #3f3f3f; border-bottom: 1px solid #8c8e8d; gap: 8px; }
    .head span { flex: 1; }
    .head button { width: 9px; height: 16px; display: grid; place-items: center; }
    .inner { flex: 1; margin: 2px 0 0 2px; min-height: 0; }
    table { border-collapse: separate; border-spacing: 0; table-layout: fixed; width: 100%; }
    th { font-weight: 400; text-align: left; padding: 1px 0 0 5px; height: 19px; line-height: 17px; border-right: 1px solid #b4b4b4; border-bottom: 1px solid #b0b0b0; white-space: nowrap; }
    th:last-child { border-right: 0; }
    thead { background: linear-gradient(#f6f6f6, #dcdcdc); }
    td { padding: 0; height: 17px; line-height: 17px; }
    td svg { display: block; }
    .name { display: flex; white-space: nowrap; }
    .w1 { width: 100px; } .w2 { width: 20px; } .w3 { width: 75px; }
    .sw { display: block; width: 18px; height: 14px; border: 1px solid #d8d8d8; border-right-color: #666; border-bottom-color: #666; }
    .n { padding-left: 3px; }
  `];

  private lines(depth: number, kind: string, i: number) {
    const w = depth ? 32 : 17;
    const x = depth ? 24 : 8;
    const d = `${kind === "first" ? "M8 9V17" : depth ? "M8 0V17" : kind === "last" ? "M8 0V9" : "M8 0V17"}
      M${x} 9H${w - 2}${depth ? `M24 0V${i === 5 ? 9 : 17}` : ""}`;
    const knob = kind === "plus" || kind === "minus";
    return svg`<svg width=${w} height="17" viewBox="0 0 ${w} 17" shape-rendering="crispEdges" aria-hidden="true">
      <path d=${d} fill="none" stroke="#8c8c8c" stroke-dasharray="1 1"></path>
      ${knob ? svg`<rect x="4" y="5" width="8" height="8" fill="#fff" stroke="#848484"></rect>
        <path d="M6 9H11${kind === "plus" ? "M8 7V12" : ""}" stroke="#000"></path>` : nothing}</svg>`;
  }

  render() {
    return html`
      <div class="head"><span>Layers</span>
        <button aria-label="Pin"><svg width="8" height="9" viewBox="0 0 8 9"><path d="M2 0V5M6 0V5M2 0.500H6M0 5.500H8M4 6V9" fill="none" stroke="#3c3c3c"></path></svg></button>
        <button aria-label="Close panel"><svg width="9" height="9" viewBox="0 0 9 9"><path d="M1 1L8 8M8 1L1 8" stroke="#3c3c3c" stroke-width="2"></path></svg></button>
      </div>
      <div class="inner">
        <tool-strip plain .items=${LAYER_TOOLS}></tool-strip>
        <table>
          <colgroup><col class="w1" /><col class="w2" /><col class="w2" /><col class="w2" /><col class="w2" /><col class="w3" /><col /></colgroup>
          <thead><tr>${["Name", "V.", "S.", "A.", "C.", "Elements", ""].map((h) => html`<th>${h}</th>`)}</tr></thead>
          <tbody>
            ${LAYERS.map(([name, depth, color, n, kind], i) => html`<tr>
              <td><div class="name">${this.lines(depth, kind, i)}${name}</div></td>
              <td><svg width="16" height="11" viewBox="0 0 16 11"><path d="M0 5.500Q7 -2 15 5.500Q8 12 0 5.500Z" fill="#fff" stroke="#000"></path>
                <path d=${el(7.5, 5.5, 3, 3)} fill="#25c9b8" stroke="#3a5a50"></path><path d=${el(7.5, 5.5, 1)} fill="#000"></path></svg></td>
              <td><svg width="16" height="14" viewBox="0 0 16 14"><path d="M5 13V10Q0 3 5 1.500H9Q14 3 10 10V13" fill="none" stroke="#c9c9c9" stroke-width="4"></path>
                <path d="M6 13V10Q1 3 6 2.500H9Q14 3 9 10V13M3 9Q0 3 4 1" fill="none" stroke="#222" stroke-width="1"></path><path d="M3 10H6M9 10H12M3 13H6M9 13H12" stroke="#e00"></path></svg></td>
              <td></td>
              <td><span class="sw" style="background:${color}"></span></td>
              <td class="n">${n}</td><td></td>
            </tr>`)}
          </tbody>
        </table>
      </div>`;
  }
}

@customElement("drawing-view")
class DrawingView extends LitElement {
  static styles = [base, css`
    :host { display: flex; flex-direction: column; min-height: 0; border: 1px solid #bdbdbd; }
    .tabs { display: flex; height: 19px; padding: 1px 0 0 8px; background: #525252; color: #fff; gap: 9px; }
    .tabs button { height: 18px; }
    .tabs .act { display: flex; align-items: center; gap: 5px; padding: 0 4px; background: linear-gradient(#fff, #d7dbe1); color: #000; border-radius: 4px 4px 0 0; font-weight: 700; border: 1px solid #cfeef2; border-bottom: 0; }
    .frame { flex: 1; min-height: 0; display: flex; flex-direction: column; background: #f0f0f0; border: 3px solid #e6e6e6; border-right-width: 6px; border-bottom-width: 6px; }
    .page { flex: 1; min-height: 0; padding: 0 16px 16px 0; border: 3px solid #7a7a7a; border-right: 0; border-bottom: 0; }
    .art { display: block; width: 100%; height: 100%; background: #fff; }
    .sheets { display: flex; height: 18px; background: linear-gradient(#565656, #7b7b7b); padding-left: 3px; border-top: 1px solid #444; gap: 3px; align-items: center; }
    .nav { width: 13px; height: 13px; background: #ececec; display: grid; place-items: center; }
    .sheet { align-self: stretch; background: linear-gradient(90deg, #fff 84%, transparent 84%); color: #000; font-weight: 700; padding: 0 10px 0 7px; margin-left: 4px; line-height: 14px; }
    .sheet.two { background: #d5d9e0; font-weight: 400; margin: 0 0 0 -6px; padding-left: 6px; }
  `];

  private art() {
    const rib = (y: number, hi: string) => svg`
      <path d="M0 ${y}L490 ${y - 230}" stroke="#a8a820" stroke-width="5"></path>
      <path d="M0 ${y + 5}L490 ${y - 225}" stroke=${hi} stroke-width="3"></path>`;
    const tick = (x: number, y: number) => svg`<path d="M${x} ${y}h7v-3M${x} ${y - 3}l5 3" fill="none" stroke="#12b012"></path>`;
    const ribs = ["#d8d840", "#c9c930", "#ffff3c", "#d0d028", "#ffff3c", "#ffff70", "#ffff3c", "#d0d028", "#ffff3c"];
    return svg`<svg class="art" viewBox="0 0 769 716" preserveAspectRatio="xMinYMin slice" role="img" aria-label="Roof plan with beams">
      <path d="M246 0H769V400H600Z" fill="#ebebeb"></path>
      <path d="M0 138L293 0H490V332L0 562Z" fill="#bfbf80"></path>
      <path d="M246 0H490V250Z" fill="#000" opacity=".07"></path>
      <path d="M0 140L296 0" stroke="#ffff70" stroke-width="7"></path>
      <path d="M0 138L293 0" stroke="#fff" stroke-width="1"></path>
      ${[180, 222, 263, 305, 347, 391, 434, 475, 517].map((y, i) => rib(y, ribs[i]))}
      <path d="M180 77L345 0H440L240 95Z" fill="#b67a70"></path>
      <path d="M180 118L435 0H450L240 99Z" fill="#95603c"></path>
      <path d="M300 62L410 0H385L290 50Z" fill="#b07a3c"></path>
      <path d="M181 77L346 -1" stroke="#ff7878" stroke-width="6"></path>
      <path d="M181 76V105" stroke="#e85050" stroke-width="2"></path>
      <path d="M235 93L440 0" stroke="#96160f" stroke-width="7"></path>
      <path d="M243 95L450 1" stroke="#b52f22" stroke-width="4"></path>
      <path d="M285 90L480 -2" stroke="#96961a" stroke-width="5"></path>
      <path d="M295 91L490 -1" stroke="#e0e020" stroke-width="3" stroke-dasharray="2 2"></path>
      <path d="M163 77L327 0M362 87L490 27" stroke="#0000e0" stroke-width="1"></path>
      <path d="M142 87L160 75L166 81L150 86Z" fill="#00f"></path>
      <path d="M0 558L140 492" stroke="#a5a51e" stroke-width="5"></path>
      <path d="M0 562L140 496" stroke="#cfcf3c" stroke-width="4"></path>
      <path d="M200 60L290 18L315 44L224 87Z" fill="#fff" stroke="#000"></path>
      <text transform="translate(225 74) rotate(-26)" font-family="Liberation Sans, sans-serif" font-weight="bold" font-size="27">20' -0"</text>
      ${tick(539, 549)}${tick(567, 553)}${tick(533, 569)}${tick(126, 509)}
    </svg>`;
  }

  render() {
    const nav = (label: string, d: string) => html`<button class="nav" aria-label=${label}>
      <svg width="9" height="9" viewBox="0 0 9 9"><path d=${d} fill="#555" stroke="#555"></path></svg></button>`;
    return html`
      <div class="tabs"><button>Start Page</button>
        <button class="act">Match Elevation.cad <svg width="8" height="8" viewBox="0 0 8 8"><path d="M0 0L8 8M8 0L0 8" stroke="#555"></path></svg></button></div>
      <div class="frame">
        <div class="page">${this.art()}</div>
        <div class="sheets">
          ${nav("First sheet", "M1 0V9M7 1V8L3 4.500Z")}${nav("Previous sheet", "M6 1V8L3 4.500Z")}${nav("Next sheet", "M3 1V8L6 4.500Z")}${nav("Last sheet", "M8 0V9M2 1V8L6 4.500Z")}
          <button class="sheet">Model</button><button class="sheet two">Sheet</button>
        </div>
      </div>`;
  }
}

@customElement("app-root")
class AppRoot extends LitElement {
  static styles = [base, css`
    :host { display: block; position: relative; height: 100vh; overflow: hidden; background: #525252; color: #fff; }
    .app { display: flex; flex-direction: column; height: 100%; }
    .title { display: flex; align-items: center; height: 23px; padding: 0 6px 0 3px; background: linear-gradient(90deg, #e4f2f3, #eaf4f8); color: #111; font: 12px/16px Roboto, "Open Sans", sans-serif; gap: 5px; flex: none; }
    .title span { flex: 1; white-space: nowrap; }
    .wb { width: 40px; height: 20px; display: grid; place-items: center; }
    .menu { display: flex; align-items: center; height: 23px; flex: none; padding: 0 1px 0 3px; gap: 1px; }
    .menu .m { padding: 0 7px; height: 22px; }
    .menu svg { flex: none; margin-right: 2px; }
    .fill { flex: 1; }
    .mdi { width: 16px; height: 16px; display: grid; place-items: center; color: #9aa3b5; }
    .strips { display: flex; height: 46px; flex: none; }
    .strips .tail { flex: 0 0 214px; justify-content: space-between; }
    .body { flex: 1; min-height: 0; display: grid; grid-template-columns: minmax(0, 1fr) 47px; }
    .work { display: flex; flex-direction: column; min-height: 0; }
    .panes { flex: 1; min-height: 0; display: grid; grid-template-columns: 107fr 80fr; }
    .left { display: flex; flex-direction: column; min-height: 0; padding-right: 4px; }
    .left layers-panel { flex: 1; }
    .ptabs { display: flex; height: 24px; padding-left: 3px; gap: 6px; flex: none; }
    .ptabs button { padding: 0 4px; height: 22px; }
    .ptabs button + button { padding: 0 3px 0 4px; }
    .ptabs .act { background: linear-gradient(#e4e7eb, #fff); color: #000; border-radius: 0 0 4px 4px; }
    .status { display: flex; justify-content: space-between; align-items: center; height: 19px; flex: none; padding: 1px 0 0 4px; background: linear-gradient(#3e414c 42%, #2d2d2b 42%); }
    .cells { display: flex; }
    .cells span { padding: 0 3px; border-left: 1px solid #777; white-space: nowrap; }
    .side { display: flex; flex-direction: column; padding-bottom: 7px; }
    .s1 { flex: 233 1 0; } .s2 { flex: 342 1 0; } .s3 { flex: 220 1 0; }
    .select-menu { position: absolute; left: 1566px; top: 146px; width: 311px; }
    .every-menu { position: absolute; left: 1209px; top: 297px; width: 359px; }
    .pipe-menu { position: absolute; left: 1429px; top: 600px; width: 172px; }
  `];

  render() {
    return html`
      <div class="app">
        <header class="title">
          <svg width="16" height="16" viewBox="0 0 16 16"><rect width="16" height="16" rx="3" fill="#2b3140"></rect><path d="M2 13L8 2L12 12M4 10H12" fill="none" stroke="#5f9df0" stroke-width="3"></path><path d="M10 3L11 12" stroke="#dce9fb" stroke-width="2"></path></svg>
          <span>AutoSPRINK® 2023 Platinum - C:\\Users\\B.Chambers\\Desktop\\AutomationTesting\\SmokeTesting\\SPRINK Smoke Testing Files\\Match Elevation.cad - [Match Elevation.cad]</span>
          <button class="wb" aria-label="Minimize"><svg width="10" height="10" viewBox="0 0 10 10"><path d="M0 5.500H10" stroke="#111"></path></svg></button>
          <button class="wb" aria-label="Restore"><svg width="10" height="10" viewBox="0 0 10 10"><path d="M2.500 2V1.500Q2.500 0.500 4 0.500H8Q9.500 0.500 9.500 2V7Q9.500 8 8.500 8M0.500 2.500H7.500V9.500H0.500Z" fill="none" stroke="#111"></path></svg></button>
          <button class="wb" aria-label="Close"><svg width="11" height="11" viewBox="0 0 11 11"><path d="M0.500 0.500L10.500 10.500M10.500 0.500L0.500 10.500" stroke="#111"></path></svg></button>
        </header>
        <nav class="menu">
          <svg width="16" height="16" viewBox="0 0 16 16" shape-rendering="crispEdges"><path d="M0 2H13L16 5V16H0Z" fill="#fff" stroke="#111"></path><path d="M1 1H12V5H1Z" fill="#ff0"></path><path d="M2 8L8 15H2Z" fill="#0b0"></path><path d="M6 7H13L9 12Z" fill="#ddd" stroke="#555"></path><path d="M13 5V8M13 12V14" stroke="#f0f" stroke-width="2"></path></svg>
          ${MENUS.map((m) => html`<button class="m">${m}</button>`)}
          <span class="fill"></span>
          <button class="mdi" aria-label="Minimize drawing"><svg width="8" height="8" viewBox="0 0 8 8"><path d="M1 7H7" stroke="currentColor" stroke-width="2"></path></svg></button>
          <button class="mdi" aria-label="Restore drawing"><svg width="9" height="8" viewBox="0 0 9 8"><path d="M2.500 2V0.500H8.500V5.500H7M0.500 2.500H6.500V7.500H0.500Z" fill="none" stroke="currentColor"></path></svg></button>
          <button class="mdi" aria-label="Close drawing"><svg width="8" height="8" viewBox="0 0 8 8"><path d="M1 0L7 8M7 0L1 8" stroke="currentColor" stroke-width="2"></path></svg></button>
        </nav>
        ${TOP.map((row) => html`<div class="strips">${row.map((items, i) => html`<tool-strip class=${i === 3 ? "tail" : ""} .items=${items}></tool-strip>`)}</div>`)}
        <div class="body">
          <div class="work">
            <div class="panes">
              <div class="left">
                <layers-panel></layers-panel>
                <div class="ptabs">${PANEL_TABS.map((t, i) => html`<button class=${i ? "" : "act"}>${t}</button>`)}</div>
              </div>
              <drawing-view></drawing-view>
            </div>
            <footer class="status"><div>Add all pipes to the selection.</div>
              <div class="cells">${["1 Selected", "", "Elev1: 2'-0", "Length: 31'-8½", "ø 2 (2.1570)", "# Off", "Foot"].map((c) => html`<span>${c}</span>`)}</div></footer>
          </div>
          <aside class="side">${SIDE.map((s, i) => html`<tool-strip vertical class="s${i + 1}" .items=${s}></tool-strip>`)}</aside>
        </div>
        <div class="strips">${BOTTOM.map((s) => html`<tool-strip .items=${s}></tool-strip>`)}</div>
      </div>
      <pop-menu class="select-menu" .columns=${[SELECT_MENU]}></pop-menu>
      <pop-menu class="every-menu" classic .columns=${[EVERY_1, EVERY_2]}></pop-menu>
      <pop-menu class="pipe-menu" .columns=${[PIPE_MENU]}></pop-menu>`;
  }
}
